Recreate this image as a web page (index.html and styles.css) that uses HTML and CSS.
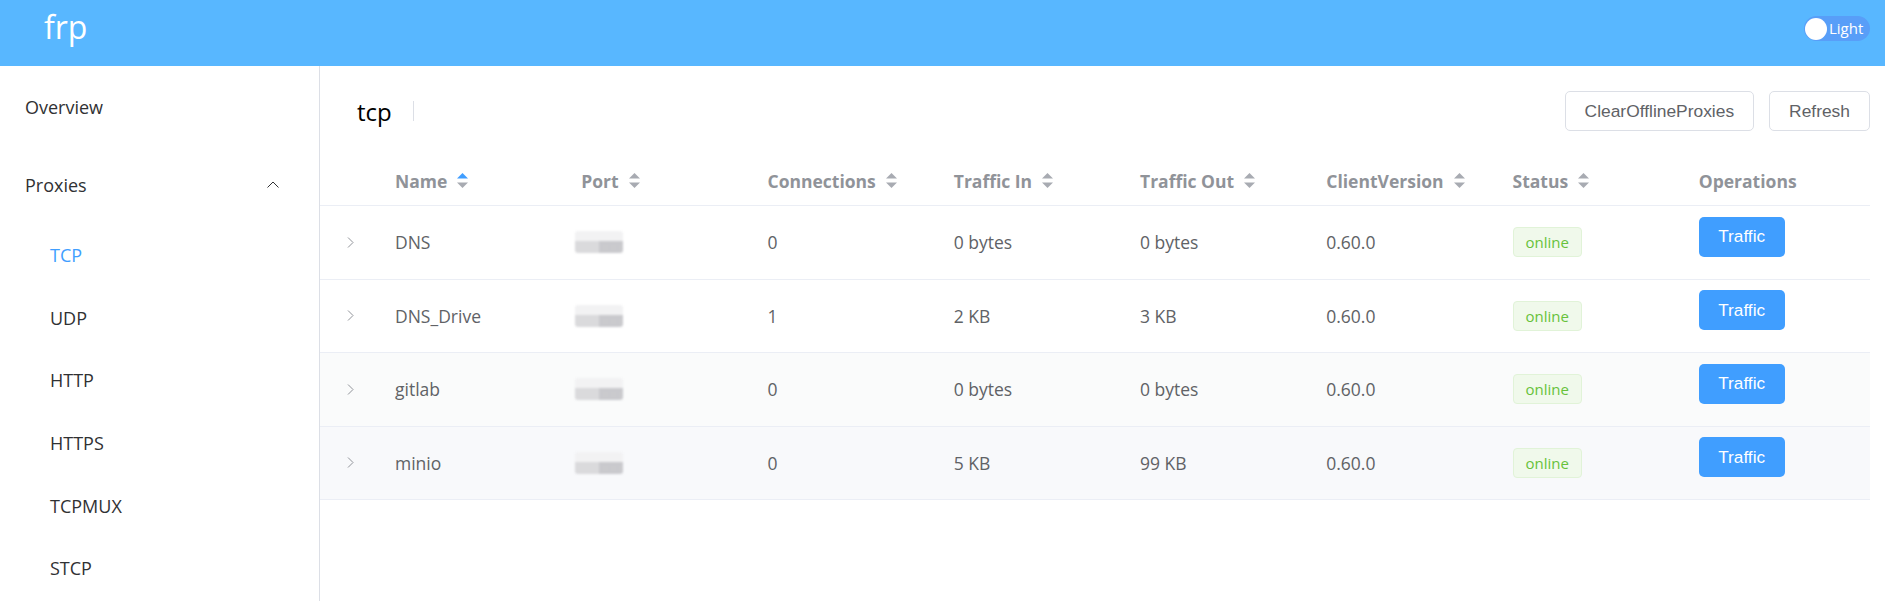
FILE: index.html
```html
<!DOCTYPE html>
<html lang="en">
<head>
<meta charset="utf-8">
<title>frp dashboard - tcp</title>
<link rel="stylesheet" href="styles.css">
</head>
<body>
<header class="topbar">
  <div class="brand">frp</div>
  <div class="theme-switch"><span class="knob"></span><span class="switch-text">Light</span></div>
</header>
<div class="layout">
  <aside class="sidebar">
    <nav class="menu">
      <div class="menu-item overview">Overview</div>
      <div class="menu-item proxies">
        <span>Proxies</span>
        <svg class="arrow-up" width="12" height="7" viewBox="0 0 12 7"><polyline points="0.5,6.5 6,1 11.5,6.5" fill="none" stroke="#303133" stroke-width="1"/></svg>
      </div>
      <div class="submenu">
        <div class="sub-item active">TCP</div>
        <div class="sub-item">UDP</div>
        <div class="sub-item">HTTP</div>
        <div class="sub-item">HTTPS</div>
        <div class="sub-item">TCPMUX</div>
        <div class="sub-item">STCP</div>
      </div>
    </nav>
  </aside>
  <main class="content">
    <div class="page-head">
      <div class="page-title"><span class="title">tcp</span><span class="divider"></span></div>
      <div class="actions">
        <button class="btn">ClearOfflineProxies</button>
        <button class="btn">Refresh</button>
      </div>
    </div>
    <div class="table">
      <div class="row head">
        <div class="cell"></div>
        <div class="cell">Name<svg class="sort" width="11" height="15" viewBox="0 0 11 15"><path d="M0 5.5 L5.5 0 L11 5.5 Z" fill="#409eff"/><path d="M0 9.5 L11 9.5 L5.5 15 Z" fill="#a8abb2"/></svg></div>
        <div class="cell">Port<svg class="sort" width="11" height="15" viewBox="0 0 11 15"><path d="M0 5.5 L5.5 0 L11 5.5 Z" fill="#a8abb2"/><path d="M0 9.5 L11 9.5 L5.5 15 Z" fill="#a8abb2"/></svg></div>
        <div class="cell">Connections<svg class="sort" width="11" height="15" viewBox="0 0 11 15"><path d="M0 5.5 L5.5 0 L11 5.5 Z" fill="#a8abb2"/><path d="M0 9.5 L11 9.5 L5.5 15 Z" fill="#a8abb2"/></svg></div>
        <div class="cell">Traffic In<svg class="sort" width="11" height="15" viewBox="0 0 11 15"><path d="M0 5.5 L5.5 0 L11 5.5 Z" fill="#a8abb2"/><path d="M0 9.5 L11 9.5 L5.5 15 Z" fill="#a8abb2"/></svg></div>
        <div class="cell">Traffic Out<svg class="sort" width="11" height="15" viewBox="0 0 11 15"><path d="M0 5.5 L5.5 0 L11 5.5 Z" fill="#a8abb2"/><path d="M0 9.5 L11 9.5 L5.5 15 Z" fill="#a8abb2"/></svg></div>
        <div class="cell">ClientVersion<svg class="sort" width="11" height="15" viewBox="0 0 11 15"><path d="M0 5.5 L5.5 0 L11 5.5 Z" fill="#a8abb2"/><path d="M0 9.5 L11 9.5 L5.5 15 Z" fill="#a8abb2"/></svg></div>
        <div class="cell">Status<svg class="sort" width="11" height="15" viewBox="0 0 11 15"><path d="M0 5.5 L5.5 0 L11 5.5 Z" fill="#a8abb2"/><path d="M0 9.5 L11 9.5 L5.5 15 Z" fill="#a8abb2"/></svg></div>
        <div class="cell">Operations</div>
      </div>

      <div class="row">
        <div class="cell expand"><svg width="7" height="11" viewBox="0 0 7 11"><polyline points="1,0.5 6,5.5 1,10.5" fill="none" stroke="#909399" stroke-width="1"/></svg></div>
        <div class="cell">DNS</div>
        <div class="cell"><span class="port-mask"></span></div>
        <div class="cell">0</div>
        <div class="cell">0 bytes</div>
        <div class="cell">0 bytes</div>
        <div class="cell">0.60.0</div>
        <div class="cell"><span class="tag">online</span></div>
        <div class="cell"><button class="btn-primary">Traffic</button></div>
      </div>

      <div class="row">
        <div class="cell expand"><svg width="7" height="11" viewBox="0 0 7 11"><polyline points="1,0.5 6,5.5 1,10.5" fill="none" stroke="#909399" stroke-width="1"/></svg></div>
        <div class="cell">DNS_Drive</div>
        <div class="cell"><span class="port-mask"></span></div>
        <div class="cell">1</div>
        <div class="cell">2 KB</div>
        <div class="cell">3 KB</div>
        <div class="cell">0.60.0</div>
        <div class="cell"><span class="tag">online</span></div>
        <div class="cell"><button class="btn-primary">Traffic</button></div>
      </div>

      <div class="row striped">
        <div class="cell expand"><svg width="7" height="11" viewBox="0 0 7 11"><polyline points="1,0.5 6,5.5 1,10.5" fill="none" stroke="#909399" stroke-width="1"/></svg></div>
        <div class="cell">gitlab</div>
        <div class="cell"><span class="port-mask"></span></div>
        <div class="cell">0</div>
        <div class="cell">0 bytes</div>
        <div class="cell">0 bytes</div>
        <div class="cell">0.60.0</div>
        <div class="cell"><span class="tag">online</span></div>
        <div class="cell"><button class="btn-primary">Traffic</button></div>
      </div>

      <div class="row hover">
        <div class="cell expand"><svg width="7" height="11" viewBox="0 0 7 11"><polyline points="1,0.5 6,5.5 1,10.5" fill="none" stroke="#909399" stroke-width="1"/></svg></div>
        <div class="cell">minio</div>
        <div class="cell"><span class="port-mask"></span></div>
        <div class="cell">0</div>
        <div class="cell">5 KB</div>
        <div class="cell">99 KB</div>
        <div class="cell">0.60.0</div>
        <div class="cell"><span class="tag">online</span></div>
        <div class="cell"><button class="btn-primary">Traffic</button></div>
      </div>
    </div>
  </main>
</div>
</body>
</html>
```

FILE: styles.css
```css
* { box-sizing: border-box; }

html, body {
  margin: 0;
  padding: 0;
  height: 601px;
  overflow: hidden;
  background: #ffffff;
  font-family: "Open Sans", "Noto Sans", sans-serif;
  color: #303133;
}

.topbar {
  height: 66px;
  background: #58b7ff;
  display: flex;
  justify-content: space-between;
  align-items: flex-start;
  padding: 0 15px 0 44px;
}

.brand {
  font-size: 32px;
  line-height: 54px;
  color: #ffffff;
}

.theme-switch {
  margin-top: 16px;
  width: 66px;
  height: 25px;
  border-radius: 13px;
  background: #589ef8;
  display: flex;
  align-items: center;
  padding-left: 1px;
  gap: 2px;
}

.knob {
  width: 22px;
  height: 22px;
  border-radius: 50%;
  background: #ffffff;
}

.switch-text {
  color: #ffffff;
  font-size: 15px;
  line-height: 25px;
}

.layout {
  display: flex;
  height: 535px;
}

.sidebar {
  width: 320px;
  flex: none;
  border-right: 1px solid #dcdfe6;
}

.menu-item {
  display: flex;
  align-items: center;
  justify-content: space-between;
  padding: 0 40px 0 25px;
  font-size: 18px;
}

.overview { height: 81px; }
.proxies { height: 75px; }

.submenu {
  padding-top: 2px;
}

.sub-item {
  height: 62.6px;
  display: flex;
  align-items: center;
  padding-left: 50px;
  font-size: 18px;
}

.sub-item.active { color: #409eff; }

.content {
  flex: 1;
  padding: 25px 15px 0 0;
}

.page-head {
  height: 40px;
  display: flex;
  justify-content: space-between;
  align-items: center;
}

.page-title {
  display: flex;
  align-items: center;
  padding-left: 37px;
}

.title {
  font-size: 24px;
  color: #000000;
}

.divider {
  width: 1px;
  height: 20px;
  background: #dcdfe6;
  margin-left: 21px;
}

.actions {
  display: flex;
  gap: 15px;
}

.btn {
  height: 40px;
  padding: 0 19px;
  border: 1px solid #dcdfe6;
  border-radius: 5px;
  background: #ffffff;
  color: #606266;
  font-family: "Liberation Sans", Arial, sans-serif;
  font-size: 17.4px;
}

.table {
  margin-top: 25px;
}

.row {
  display: grid;
  grid-template-columns: 60px repeat(8, 1fr);
  height: 73.5px;
  border-bottom: 1px solid #ebeef5;
  color: #606266;
  font-size: 17.5px;
}

.row.head {
  height: 50px;
  color: #909399;
  font-weight: 700;
}

.row.striped { background: #fafbfb; }
.row.hover { background: #f8f9fb; }

.cell {
  display: flex;
  align-items: center;
  padding-left: 15px;
}

.cell.expand {
  padding-left: 27px;
}

.sort {
  margin-left: 10px;
}

.port-mask {
  display: block;
  width: 48px;
  height: 22px;
  margin-left: -6px;
  background:
    linear-gradient(to right, rgba(255,255,255,0) 0 50%, rgba(200,200,204,0.9) 50% 100%) bottom / 100% 55% no-repeat,
    linear-gradient(to bottom, #f2f2f3 0 45%, #dadadc 45% 100%);
  border-radius: 3px;
  filter: blur(0.8px);
}

.tag {
  display: inline-flex;
  align-items: center;
  height: 30px;
  padding: 0 12px;
  border: 1px solid #e1f3d8;
  border-radius: 4px;
  background: #f0f9eb;
  color: #67c23a;
  font-size: 15px;
}

.btn-primary {
  height: 40px;
  padding: 0 19.5px;
  margin-bottom: 11px;
  border: none;
  border-radius: 5px;
  background: #409eff;
  color: #ffffff;
  font-family: "Liberation Sans", Arial, sans-serif;
  font-size: 17.2px;
}
```
